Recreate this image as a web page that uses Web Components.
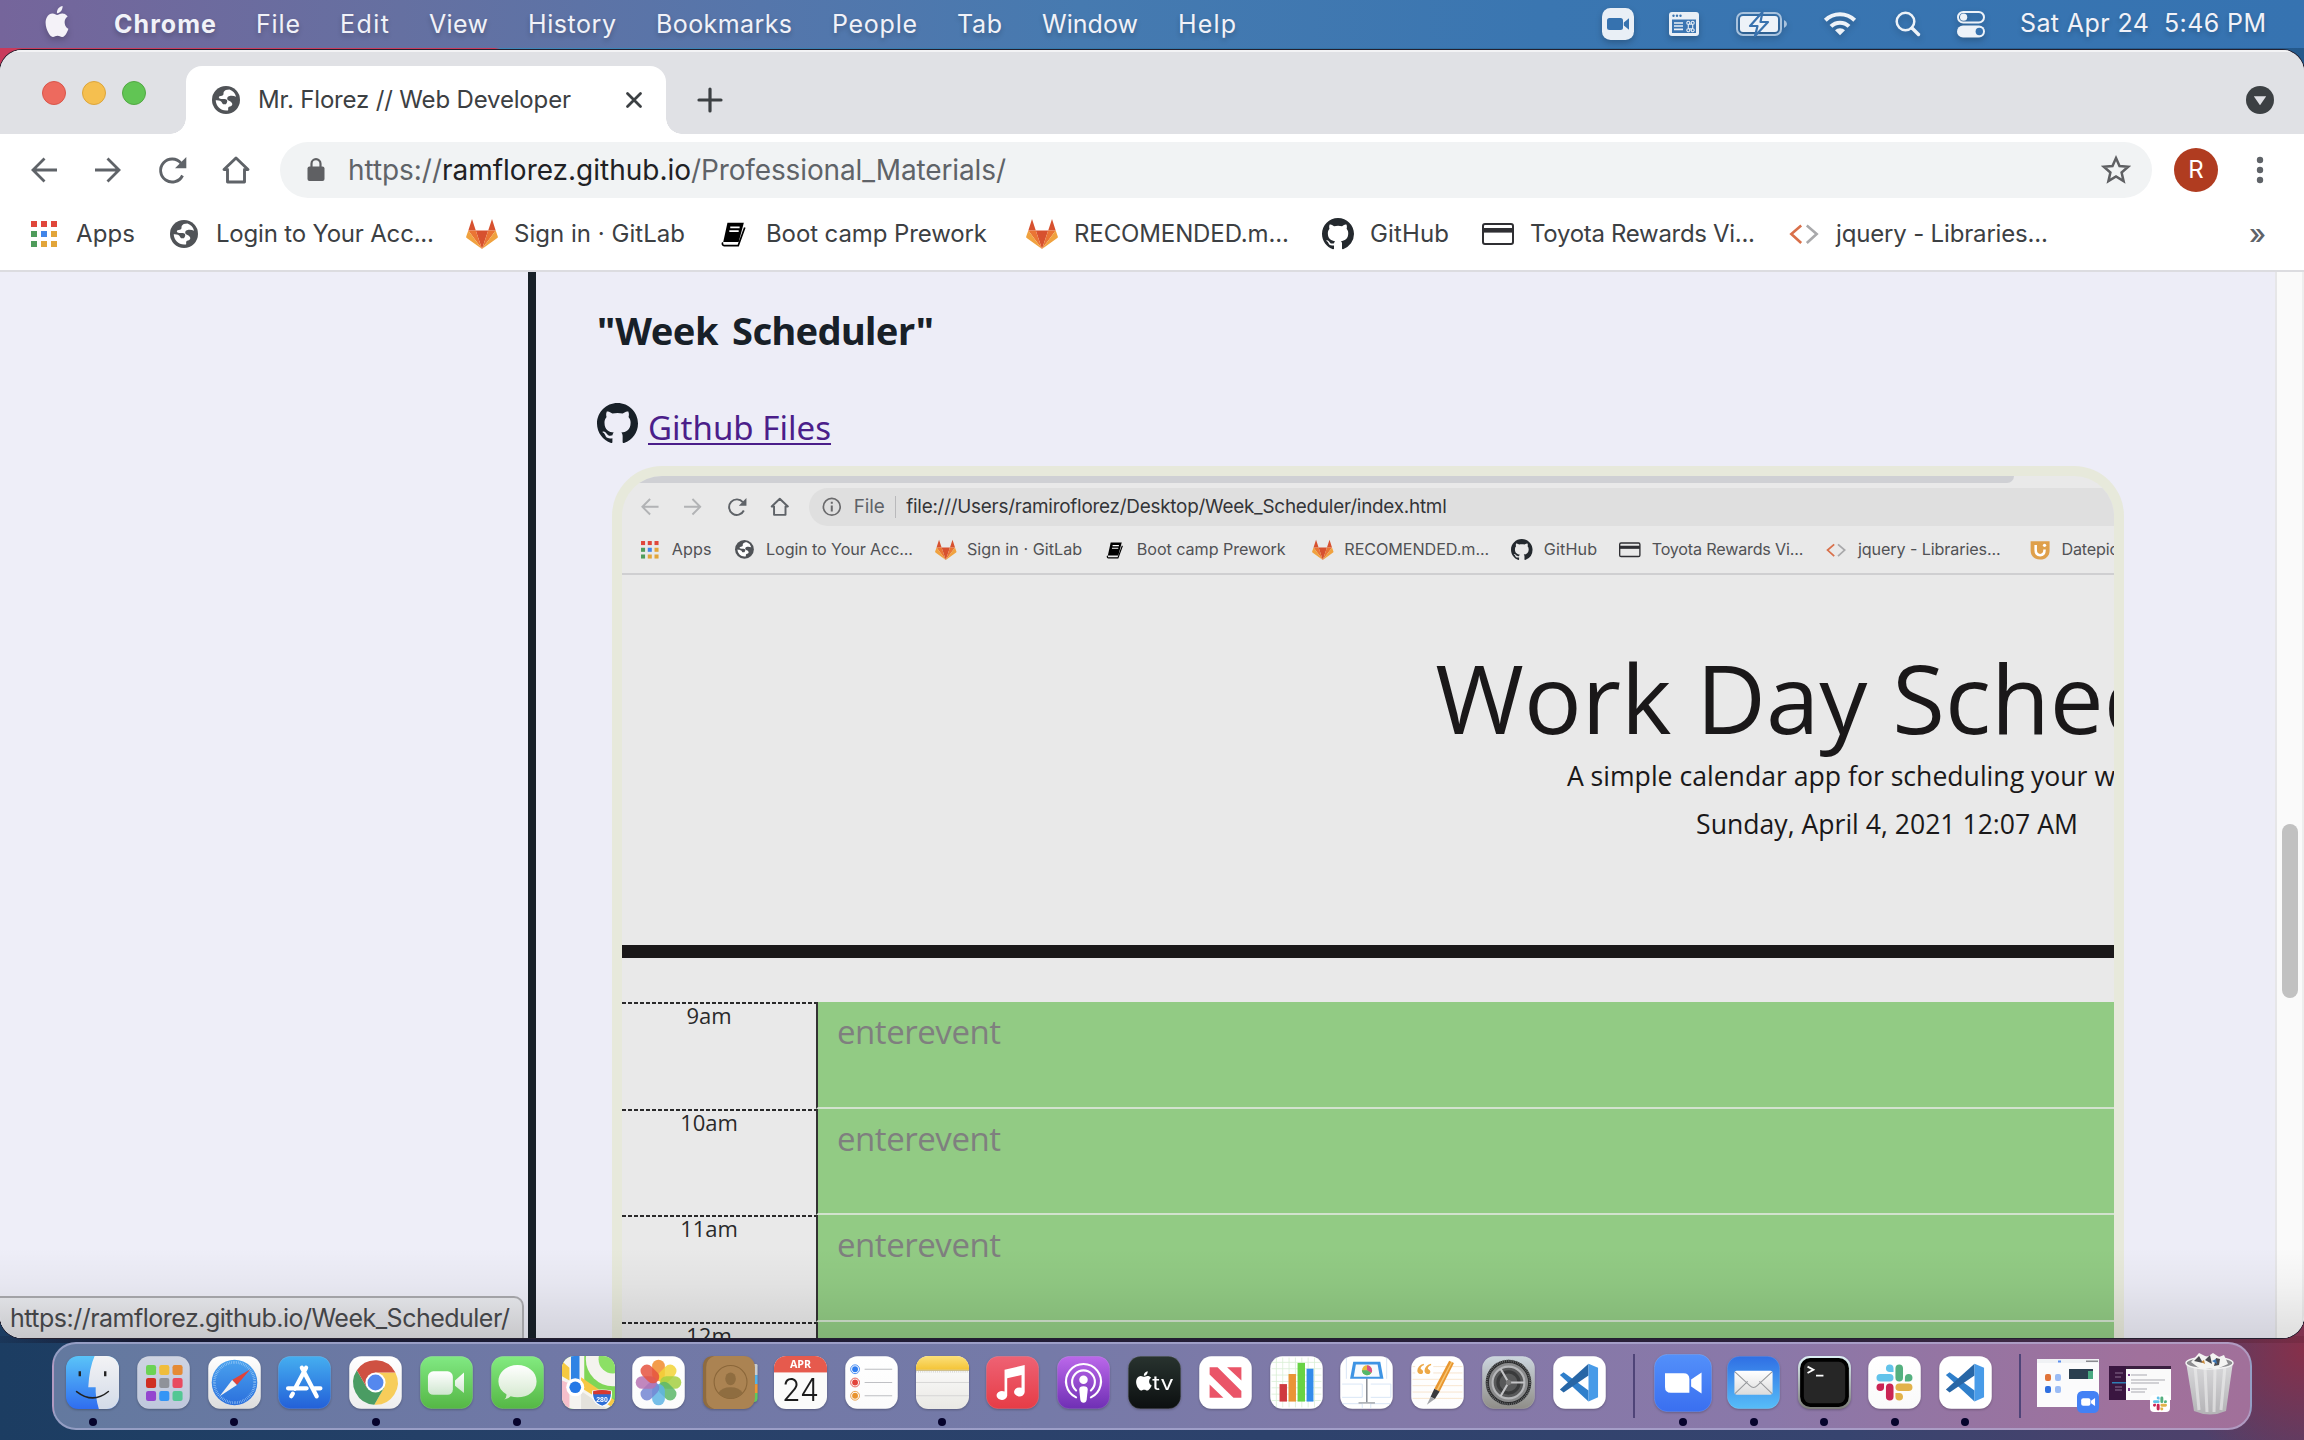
<!DOCTYPE html>
<html lang="en">
<head>
<meta charset="utf-8">
<title>Mr. Florez // Web Developer</title>
<style>
html,body{margin:0;padding:0;width:2304px;height:1440px;overflow:hidden;background:#1f3f66}
</style>
</head>
<body>
<mac-desktop></mac-desktop>
<script>
function define(name, render, after) {
  customElements.define(name, class extends HTMLElement {
    connectedCallback() {
      if (this.shadowRoot) return;
      this.attachShadow({ mode: 'open' }).innerHTML = render(this);
      if (after) after(this);
    }
  });
}

/* Icon registry: [viewBox, markup] */
const cat = 'M8 0C3.58 0 0 3.58 0 8c0 3.54 2.29 6.53 5.47 7.59.4.07.55-.17.55-.38 0-.19-.01-.82-.01-1.49-2.01.37-2.53-.49-2.69-.94-.09-.23-.48-.94-.82-1.13-.28-.15-.68-.52-.01-.53.63-.01 1.08.58 1.23.82.72 1.21 1.87.87 2.33.66.07-.52.28-.87.51-1.07-1.78-.2-3.64-.89-3.64-3.95 0-.87.31-1.59.82-2.15-.08-.2-.36-1.02.08-2.12 0 0 .67-.21 2.2.82.64-.18 1.32-.27 2-.27s1.36.09 2 .27c1.53-1.04 2.2-.82 2.2-.82.44 1.1.16 1.92.08 2.12.51.56.82 1.27.82 2.15 0 3.07-1.87 3.75-3.65 3.95.29.25.54.73.54 1.48 0 1.07-.01 1.93-.01 2.2 0 .21.15.46.55.38A8.01 8.01 0 0016 8c0-4.42-3.58-8-8-8z';
const apple = 'M12.152 6.896c-.948 0-2.415-1.078-3.96-1.04-2.04.027-3.91 1.183-4.961 3.014-2.117 3.675-.546 9.103 1.519 12.09 1.013 1.454 2.208 3.09 3.792 3.039 1.52-.065 2.09-.987 3.935-.987 1.831 0 2.35.987 3.96.948 1.637-.026 2.676-1.48 3.676-2.948 1.156-1.688 1.636-3.325 1.662-3.415-.039-.013-3.182-1.221-3.22-4.857-.026-3.04 2.48-4.494 2.597-4.559-1.429-2.09-3.623-2.324-4.39-2.376-2-.156-3.675 1.09-4.61 1.09zM15.53 3.83c.843-1.012 1.4-2.427 1.245-3.83-1.207.052-2.662.805-3.532 1.818-.78.896-1.454 2.338-1.273 3.714 1.338.104 2.715-.688 3.559-1.701';
const grad = (id, a, b) => `<linearGradient id="${id}" x1="0" y1="0" x2="0" y2="1"><stop offset="0" stop-color="${a}"/><stop offset="1" stop-color="${b}"/></linearGradient>`;
const tile = (a, b) => `${grad('bg', a, b)}<rect x=".5" y=".5" width="99" height="99" rx="23" fill="url(#bg)" stroke="#fff" stroke-opacity=".25"/>`;
const clip = '<clipPath id="c"><rect width="100" height="100" rx="23"/></clipPath>';
const slackPart = 'M5.042 15.165a2.528 2.528 0 0 1-2.52 2.523A2.528 2.528 0 0 1 0 15.165a2.527 2.527 0 0 1 2.522-2.52h2.52v2.52zM6.313 15.165a2.527 2.527 0 0 1 2.521-2.52 2.527 2.527 0 0 1 2.521 2.52v6.313A2.528 2.528 0 0 1 8.834 24a2.528 2.528 0 0 1-2.521-2.522v-6.313z';
const slackMark = ['#ca2554', '#62c3ea', '#54b07f', '#e2b24a'].map((f, i) => `<path d="${slackPart}" fill="${f}" transform="rotate(${i * 90} 12 12)"/>`).join('');
const ticks = (cx, cy, r, n, col, dash) => `<circle cx="${cx}" cy="${cy}" r="${r}" fill="none" stroke="${col}" stroke-width="5" stroke-dasharray="${dash}"/>`;
const vscode = `${tile('#fff', '#fff')}<path d="M13 36l7-5.500L67 65v21z" fill="#2f7fcb"/><path d="M67 14.500V37L20 69l-7-6z" fill="#2766a6"/><path d="M67 14.500L85 22v56L67 86z" fill="#489be8"/>`;

const ICONS = {
  apple: ['0 0 24 24', `<path d="${apple}" fill="#f4f2f8"/>`],
  octocat: ['0 0 16 16', `<path d="${cat}" fill="currentColor"/>`],
  globe: ['0 0 28 28', '<circle cx="14" cy="14" r="14" fill="#505357"/><path d="M17.500 3.500c-3 0-5 .8-5.800 2.600-.5 1.300.3 2.300-.8 3.200-1 .9-3.400.4-3.900 1.500-.6 1.500.4 2.100 2.600 2.100 3 0 5.200-.2 5.600 1.800.3 1.500-.8 2.300-1.200 3.600h-2.300c-1 0-1.200-.9-1.800-1.900-.8-1.400-2.600-2-5.200-2.100-.6 0-1-.1-1-.1.200 5.600 4.600 10.300 10.400 10.300 1 0 1.800-.1 2-.3.400-.7-.2-1.700.2-2.700.6-1.300 2.900-.8 3.700-2.300.6-1.200.1-2.200-.7-3-.9-1-2.700-1.200-3.600-2.200-1-1.200-.4-3.200 1.200-3.700 2.600-.8 4.800-.4 7.200.4A10.500 10.500 0 0 0 17.500 3.500z" fill="#fff"/>'],
  close: ['0 0 18 18', '<path d="M2.500 2.500l13 13M15.500 2.500l-13 13" stroke="#3c4043" stroke-width="2.800" stroke-linecap="round"/>'],
  plus: ['0 0 24 24', '<path d="M12 1v22M1 12h22" stroke="#3c4043" stroke-width="3.200" stroke-linecap="round"/>'],
  drop: ['0 0 28 28', '<circle cx="14" cy="14" r="14" fill="#3c4043"/><path d="M7.800 10.300h12.400L14 19.200z" fill="#e0e1e5"/>'],
  back: ['0 0 32 32', '<path d="M29 16H5M16.500 4.500L5 16l11.500 11.500" fill="none" stroke="currentColor" stroke-width="2.800"/>'],
  forward: ['0 0 32 32', '<path d="M3 16h24M15.500 4.500L27 16 15.500 27.500" fill="none" stroke="currentColor" stroke-width="2.800"/>'],
  reload: ['0 0 32 32', '<path d="M26.500 21.500A11.500 11.500 0 1 1 25 9.200" fill="none" stroke="currentColor" stroke-width="2.900"/><path d="M30.300 3v11.300H19z" fill="currentColor"/>'],
  home: ['0 0 32 32', '<path d="M7.500 28V15.500H4L16 4l12 11.500h-3.500V28z" fill="none" stroke="currentColor" stroke-width="2.900" stroke-linejoin="round"/>'],
  lock: ['0 0 32 32', '<rect x="7.500" y="12.500" width="17" height="14.500" rx="2" fill="#5f6063"/><path d="M11.500 13V9.700a4.500 4.500 0 0 1 9 0V13" fill="none" stroke="#5f6063" stroke-width="2.200"/>'],
  info: ['0 0 32 32', '<circle cx="16" cy="16" r="12.500" fill="none" stroke="#6a6a6c" stroke-width="2.500"/><path d="M16 14v9M16 8.500v3" stroke="#6a6a6c" stroke-width="3"/>'],
  star: ['0 0 32 32', '<path d="M16 4l3.500 8 8.700.8-6.600 5.700 2 8.600L16 22.500l-7.600 4.600 2-8.600-6.600-5.700 8.700-.8z" fill="none" stroke="#5f6063" stroke-width="2.500"/>'],
  dots: ['0 0 8 28', '<circle cx="4" cy="4" r="3.200" fill="#5f6368"/><circle cx="4" cy="14" r="3.200" fill="#5f6368"/><circle cx="4" cy="24" r="3.200" fill="#5f6368"/>'],
  apps: ['0 0 32 32', [[3, 3, '#e0473b'], [13, 3, '#e0473b'], [23, 3, '#e0473b'], [3, 13, '#4f9c5b'], [13, 13, '#4285e8'], [23, 13, '#e2a53a'], [3, 23, '#4f9c5b'], [13, 23, '#e2a53a'], [23, 23, '#e2a53a']].map(([x, y, f]) => `<rect x="${x}" y="${y}" width="6" height="6" fill="${f}"/>`).join('')],
  gitlab: ['0 0 32 32', '<path d="M6 1L2.300 12.500h7.500zM26 1l3.700 11.500h-7.500zM9.800 12.500h12.400L16 31z" fill="#d7512f"/><path d="M2.300 12.500h7.500L16 31zM29.700 12.500h-7.500L16 31z" fill="#ea7434"/><path d="M2.300 12.500L.2 18.500c-.2.700 0 1.200.5 1.600L16 31zM29.700 12.500l2.100 6c.2.700 0 1.200-.5 1.600L16 31z" fill="#f0a23f"/>'],
  book: ['0 0 32 32', '<path d="M9 4h17.500L21 24.500H4.500z" fill="#000"/><path d="M12 9h10M11 13h10" stroke="#fff" stroke-width="1.800"/><path d="M4 25c-1 2 0 3.300 1.500 3.300h15L27.500 9" fill="none" stroke="#000" stroke-width="1.800"/>'],
  card: ['0 0 32 32', '<rect x="1" y="6" width="30" height="20" rx="2" fill="none" stroke="#2f2f33" stroke-width="2"/><rect x="1" y="10" width="30" height="4.600" fill="#2f2f33"/>'],
  code: ['0 0 32 32', '<path d="M13 7L2.500 16 13 25.500" fill="none" stroke="#d9704a" stroke-width="2.800"/><path d="M19 7l10.500 9L19 25.500" fill="none" stroke="#a9a9ab" stroke-width="2.800"/>'],
  picker: ['0 0 32 32', '<path d="M1 2h30v15c0 8-6 14-15 14S1 25 1 17z" fill="#dfa04b"/><path d="M9 8v8c0 5 3 8 7 8s7-3 7-8v-1" fill="none" stroke="#fff" stroke-width="4"/><circle cx="23" cy="8.500" r="2.600" fill="#fff"/>'],
  /* menu bar status */
  zoomStatus: ['0 0 32 32', '<rect width="32" height="32" rx="8.500" fill="#e9eff6"/><rect x="5" y="10" width="16" height="12" rx="2.500" fill="#3672af"/><path d="M21.800 14.500L27 10.200v11.600l-5.200-4.300z" fill="#3672af"/>'],
  keys: ['0 0 30 24', '<rect x=".0" y="0" width="30" height="24" rx="3" fill="#e9eff6"/><path d="M3 7.500h24v13.500H3z" fill="#3b75b2"/><g fill="#3b75b2"><circle cx="4.500" cy="3.700" r="1.200"/><circle cx="8" cy="3.700" r="1.200"/><circle cx="11.500" cy="3.700" r="1.200"/></g><path d="M5 11h9M5 14h9M5 17.300h9" stroke="#e9eff6" stroke-width="1.700"/><path d="M19.300 12.300h4.400v4.400h-4.400zM19.300 12.300a1.500 1.500 0 1 0-1.500-1.400q0 1.400 1.500 1.400zM23.700 12.300a1.500 1.500 0 1 1 1.500-1.400q0 1.400-1.500 1.400zM19.300 16.700a1.500 1.500 0 1 1-1.500 1.400q0-1.400 1.500-1.400zM23.700 16.700a1.500 1.500 0 1 0 1.500 1.400q0-1.400-1.500-1.400z" fill="none" stroke="#e9eff6" stroke-width="1.100"/>'],
  battery: ['0 0 52 26', '<rect x="1" y="2" width="44" height="22" rx="6" fill="none" stroke="#a9c3de" stroke-width="2"/><path d="M48 9q3 1.500 3 4t-3 4z" fill="#a9c3de"/><rect x="4" y="5" width="38" height="16" rx="3" fill="#edf2f8"/><path d="M26.500 1L14 15h7.500L19 25 32 11h-7.500z" fill="#edf2f8" stroke="#3972ae" stroke-width="2.200" stroke-linejoin="round"/>'],
  wifi: ['0 0 34 26', '<g fill="none" stroke="#edf2f8" stroke-width="4"><path d="M2.300 10.200a21 21 0 0 1 29.400 0"/><path d="M8 16.400a12.700 12.700 0 0 1 18 0"/></g><path d="M17 25.300l-5-5a7 7 0 0 1 10 0z" fill="#edf2f8"/>'],
  search: ['0 0 26 26', '<circle cx="10.500" cy="10.500" r="8.800" fill="none" stroke="#edf2f8" stroke-width="2.500"/><path d="M17 17l6.500 6.500" stroke="#edf2f8" stroke-width="3.400" stroke-linecap="round"/>'],
  control: ['0 0 28 28', '<rect x="1" y="2" width="26" height="10.500" rx="5.250" fill="none" stroke="#edf2f8" stroke-width="2"/><circle cx="6.600" cy="7.200" r="3.600" fill="#edf2f8"/><rect x="0" y="15.500" width="28" height="12" rx="6" fill="#edf2f8"/><circle cx="22.300" cy="21.500" r="3.700" fill="#3672af"/>'],
  /* dock */
  finder: ['0 0 100 100', `${clip}${grad('a', '#5ac4f8', '#2f6df0')}${grad('b', '#f3f3f5', '#d3dbe8')}<g clip-path="url(#c)"><rect width="100" height="100" fill="url(#a)"/><path d="M54 0Q44 22 42 59h14q-1 18 6 41h38V0z" fill="url(#b)"/></g><path d="M26 29v9M74 29v9" stroke="#222" stroke-width="4.500"/><path d="M20 67q31 24 60 0" fill="none" stroke="#222" stroke-width="3" stroke-linecap="round"/>`],
  launchpad: ['0 0 100 100', tile('#cfd4e2', '#bfc8dc') + ['#6bd355', '#f0bd3c', '#e58a35', '#cf2f23', '#8f9299', '#e84a5f', '#9446cf', '#3495f5', '#54c794'].map((f, i) => `<rect x="${17 + (i % 3) * 25}" y="${17 + Math.floor(i / 3) * 24.500}" width="19" height="19" rx="4" fill="${f}"/>`).join('')],
  safari: ['0 0 100 100', `${tile('#fff', '#dcdcdc')}${grad('s', '#4aa2ee', '#2b6fdc')}<circle cx="50" cy="50" r="43" fill="url(#s)"/>${ticks(50, 50, 38, 60, '#a9d2f7', '1 2.300')}<path d="M80 25L45.500 45.500l9 9z" fill="#e0433a"/><path d="M22 76l32.500-21.500-9-9z" fill="#f1f1f1"/>`],
  appstore: ['0 0 100 100', `${tile('#45aef0', '#2360d8')}<g stroke="#fff" stroke-width="8" stroke-linecap="round"><path d="M53 22L32 62M45 22l28 54M19 61h35M69 61h11M28 71l-3 5"/></g>`],
  chrome: ['0 0 100 100', `${tile('#fff', '#eee')}<path d="M50 31H87.500A42 42 0 0 1 47.700 92L66.450 59.500z" fill="#f7cd5a"/><path d="M66.450 59.500L47.700 92A42 42 0 0 1 14.800 27L33.550 59.500z" fill="#4a9c63"/><path d="M33.550 59.500L14.800 27A42 42 0 0 1 87.500 31H50z" fill="#cf5142"/><circle cx="50" cy="50" r="19" fill="#fff"/><circle cx="50" cy="50" r="15" fill="#5588ee"/>`],
  facetime: ['0 0 100 100', `${tile('#81e983', '#55b745')}${grad('w', '#fff', '#cfe6cf')}<rect x="15" y="29" width="47" height="44" rx="10" fill="url(#w)"/><path d="M66 46l17-15v39L66 56z" fill="url(#w)"/>`],
  messages: ['0 0 100 100', `${tile('#83eb80', '#55b745')}${grad('w', '#fff', '#d3e8cd')}<path d="M50 17c20 0 36 13 36 31S70 78 50 78q-7 0-13-2-4 5-12 6 5-4 4-10Q14 63 14 48c0-18 16-31 36-31z" fill="url(#w)"/>`],
  maps: ['0 0 100 100', `${clip}<g clip-path="url(#c)"><rect width="100" height="100" fill="#7fd657"/><circle cx="96" cy="6" r="51" fill="#f4f3ee"/><circle cx="96" cy="6" r="27" fill="#8ce065"/><path d="M0 0h42v60L100 88v12H0z" fill="#f5f4f0"/><path d="M42 0v46L80 76 42 58z" fill="#7fd657"/><path d="M0 10l14 12v24L0 38z" fill="#f6c93f"/><path d="M0 46l14 6v48H0z" fill="#f6bfcb"/><path d="M36 40l64 44v16L36 60z" fill="#f7c744"/><path d="M36 66l50 34H36z" fill="#e4e2dc"/><path d="M25 0v60" stroke="#2f83e4" stroke-width="16"/></g><circle cx="25" cy="59" r="17" fill="#fff"/><circle cx="25" cy="59" r="11" fill="#2478e6"/><path d="M58 66q17-4 35 0 3 22-17 29-21-7-18-29z" fill="#2f6fd6" stroke="#fff" stroke-width="2"/><path d="M59 66q16-4 33 0v6H59z" fill="#d8392f"/><text x="75.500" y="86" font-family="Liberation Sans" font-weight="700" font-size="13" fill="#fff" text-anchor="middle">280</text>`],
  photos: ['0 0 100 100', tile('#fff', '#fbfbfb') + ['#f18b2c', '#f2d437', '#a5cf42', '#5cb768', '#5fb4e4', '#7386d2', '#b672b3', '#e5533f'].map((f, i) => `<rect x="38" y="7" width="24" height="40" rx="12" fill="${f}" fill-opacity=".85" transform="rotate(${i * 45} 50 50)"/>`).join('')],
  contacts: ['0 0 100 100', '<path d="M88 15h13q2 0 2 3v18H90z" fill="#c9cdd0"/><path d="M90 36h13v17H90z" fill="#55b3e8"/><path d="M90 53h13v17H90z" fill="#ee9632"/><path d="M90 70h13v10q0 5-5 7h-8z" fill="#60c85c"/><rect x="0" y="0" width="98" height="100" rx="21" fill="#ab8352"/><path d="M21 0Q0 0 0 21v58q0 21 21 21-15-5-15-21V21Q6 5 21 0z" fill="#8e6b40"/><g fill="none" stroke="#8a6639" stroke-width="2"><circle cx="52" cy="49" r="31"/></g><ellipse cx="52" cy="43" rx="10" ry="12" fill="#8f6d40"/><path d="M29 70q6-11 23-11t23 11q-9 10-23 10T29 70z" fill="#8f6d40"/>'],
  calendar: ['0 0 100 100', `${clip}<g clip-path="url(#c)"><rect width="100" height="100" fill="#fbfbfa"/><rect width="100" height="31" fill="#e65a4d"/></g><text x="50" y="23" font-family="Open Sans" font-weight="700" font-size="20" fill="#fff" text-anchor="middle" textLength="40" lengthAdjust="spacingAndGlyphs">APR</text><text x="50" y="84" font-family="Inter" font-weight="300" font-size="60" fill="#1c1c1c" text-anchor="middle" textLength="70" lengthAdjust="spacingAndGlyphs">24</text>`],
  reminders: ['0 0 100 100', tile('#fff', '#fbfbfb') + [['#2f7df0', 25], ['#e2433a', 50], ['#e8932e', 75]].map(([f, y]) => `<circle cx="19" cy="${y}" r="8.300" fill="none" stroke="${f}" stroke-width="1.600"/><circle cx="19" cy="${y}" r="5.500" fill="${f}"/><path d="M37 ${y}h52" stroke="#bfc0c4" stroke-width="2"/>`).join('')],
  notes: ['0 0 100 100', `${clip}${grad('y', '#fbe07a', '#f4c436')}${grad('p', '#fff', '#e9e8e4')}<g clip-path="url(#c)"><rect width="100" height="100" fill="url(#p)"/><rect width="100" height="26" fill="url(#y)"/><path d="M0 27h100" stroke="#b99f4a" stroke-width="1.500"/><path d="M0 30h100" stroke="#aaa" stroke-width="1.500" stroke-dasharray="1.500 2.500"/><path d="M0 50h100M0 75h100" stroke="#cfcfcf" stroke-width="1.500"/></g>`],
  music: ['0 0 100 100', `${tile('#ee6274', '#e63c46')}<path d="M35 26l38-9v51a10 8.500 0 1 1-6-8V36l-27 6v33a10 8.500 0 1 1-5-8z" fill="#fff"/>`],
  podcasts: ['0 0 100 100', `${tile('#bb68ea', '#6f2fb4')}<g fill="none" stroke="#fff" stroke-width="4" stroke-linecap="round"><path d="M36 78a33 33 0 1 1 28 0"/><path d="M36 65a21.500 21.500 0 1 1 28 0"/></g><circle cx="50" cy="45" r="8" fill="#fff"/><path d="M42 63q0-6 8-6t8 6l-2 19q-1 6-6 6t-6-6z" fill="#fff"/>`],
  tv: ['0 0 100 100', `${tile('#28332f', '#0c0f10')}<g transform="translate(12 29) scale(1.500)"><path d="${apple}" fill="#fff"/></g><text x="46" y="65" font-family="Inter" font-weight="400" font-size="37" fill="#fff" textLength="40" lengthAdjust="spacingAndGlyphs">tv</text>`],
  news: ['0 0 100 100', `${tile('#fff', '#fff')}<path d="M20 21h15l45 45v13H65L20 35z" fill="#ea5568"/><path d="M53 21h27v25zM20 54v25h26z" fill="#ea5568"/>`],
  numbers: ['0 0 100 100', `${tile('#fff', '#fff')}<path d="M12 3v94M24 3v94M36 3v94M48 3v94M60 3v94M72 3v94M84 3v94M3 12h94M3 24h94M3 36h94M3 48h94M3 60h94M3 72h94M3 84h94" stroke="#d9efd5" stroke-width="1.500"/><path d="M18 53h14v33H18z" fill="#cf3a3f"/><path d="M35 34h14v52H35z" fill="#ea9437"/><path d="M52 13h14v73H52z" fill="#68d345"/><path d="M69 24h13v62H69z" fill="#338ceb"/>`],
  keynote: ['0 0 100 100', `${tile('#fff', '#fff')}<g fill="none" stroke="#cfe0f4" stroke-width="1.500"><path d="M4 53h38v25H4M58 53h38v25H58M4 90h38v8M58 98v-8h38M12 3v40M88 3v40"/></g><path d="M49 42h3v46h-3z" fill="#8c9097"/><path d="M35 87h31v3H35z" fill="#a9adb2"/><path d="M25 11h51l6 32H19z" fill="#3e94e4"/><path d="M30 16h41l4 23H26z" fill="#f7fafd"/><circle cx="51" cy="27" r="9.500" fill="#e9ba3c"/><path d="M51 27V17.500a9.500 9.500 0 0 1 8 14.500z" fill="#da4f87"/><path d="M51 27l8 5a9.500 9.500 0 0 1-17.500-5z" fill="#52b86c"/>`],
  pages: ['0 0 100 100', `${tile('#fff', '#fdfdfd')}<path d="M3 20h94M3 32h94M3 44h94M3 56h94M3 68h94M3 80h94" stroke="#f6dfc4" stroke-width="1.500"/><path d="M8 10h34v28H8z" fill="#fff"/><text x="9" y="56" font-family="Liberation Serif" font-weight="700" font-size="62" fill="#eda846">“</text><path d="M72 9l9 4-27 54-10-5z" fill="#e8962f"/><path d="M76 11l2 1-27 53-3-1z" fill="#f7c774"/><path d="M44 62l10 5-9 14-8-4z" fill="#3b3b3d"/><path d="M37 77l8 4-15 11z" fill="#a3a5a8"/>`],
  prefs: ['0 0 100 100', `${tile('#ccd6de', '#8f8d88')}<circle cx="50" cy="50" r="40" fill="#8a8b8c" stroke="#2c2d2e" stroke-width="6"/>${ticks(50, 50, 41, 60, '#77797b', '1.200 2.400')}<circle cx="50" cy="50" r="30" fill="#58595a" stroke="#b5b6b8" stroke-width="4"/><circle cx="50" cy="50" r="20" fill="none" stroke="#3a3b3c" stroke-width="6"/><g stroke="#c3c4c6" stroke-width="4"><path d="M50 50h30M50 50L35 24M50 50L35 76"/></g><circle cx="50" cy="50" r="5" fill="#777"/>`],
  vscode: ['0 0 100 100', vscode],
  zoom: ['0 0 100 100', `${tile('#5390fa', '#3a6ff0')}<path d="M19 33h32q10 0 10 10v24H29q-10 0-10-10z" fill="#fff"/><path d="M64 44l18-12v36L64 56z" fill="#fff"/>`],
  mail: ['0 0 100 100', `${tile('#2f6fe4', '#57bdf8')}${grad('w', '#fff', '#dcdcdc')}<rect x="14" y="28" width="72" height="45" rx="4" fill="url(#w)"/><path d="M15 71l24-23M85 71L61 48M15 30l28 26q7 7 14 0l28-26" fill="none" stroke="#97999c" stroke-width="2"/>`],
  terminal: ['0 0 100 100', `${grad('t', '#dff1f6', '#7b7b78')}<rect width="100" height="100" rx="22" fill="url(#t)"/><rect x="4" y="4" width="92" height="92" rx="19" fill="#000"/><rect x="11" y="11" width="78" height="78" rx="12" fill="#262626"/><path d="M18 20l11 6-11 6M34 37h14" fill="none" stroke="#fff" stroke-width="3.500"/>`],
  slack: ['0 0 100 100', `${tile('#fff', '#fafafa')}<g transform="translate(16 16) scale(2.830)">${slackMark}</g>`],
  winZoom: ['0 0 62 54', '<path d="M0 0h62v48H0z" fill="#fbfbfc"/><path d="M0 0h62v4H0z" fill="#f0f2f5"/><rect x="21" y="1.500" width="3" height="2" fill="#5b8ff0"/><rect x="49" y="1.500" width="12" height="1.500" fill="#8a8a90"/><rect x="8" y="15" width="6" height="7" rx="2" fill="#e0743a"/><rect x="18" y="15" width="6" height="7" rx="2" fill="#9bbcf5"/><rect x="8" y="27" width="6" height="7" rx="2" fill="#2f6fe0"/><rect x="18" y="27" width="6" height="7" rx="2" fill="#9bbcf5"/><rect x="32" y="10" width="24" height="10" fill="#2b3f50"/><rect x="51" y="12" width="5" height="8" fill="#49a881"/><g transform="translate(40 32) scale(.220)"><rect width="100" height="100" rx="24" fill="#4381f5"/><rect x="19" y="33" width="42" height="34" rx="9" fill="#fff"/><path d="M64 44l18-12v36L64 56z" fill="#fff"/></g>'],
  winSlack: ['0 0 62 46', `<path d="M0 0h62v34H0z" fill="#fafafa"/><path d="M0 0h62v3H0z" fill="#3b1f40"/><path d="M0 0h17v34H0z" fill="#3a1640"/><path d="M3 16h14v1.500H3z" fill="#2f7fb4"/><path d="M6 7h8M6 11h6M6 21h7M6 24h7" stroke="#8a6f90" stroke-width="1"/><path d="M22 9h16M22 14h34M22 17h28M22 23h16M22 26h14" stroke="#a9a9b0" stroke-width="1"/><path d="M19 8h2v2h-2zM19 22h2v3h-2z" fill="#7c3f8f"/><rect x="41" y="29" width="20" height="17" rx="4" fill="#fff"/><g transform="translate(44 30.500) scale(.583)">${slackMark}</g>`],
  trash: ['0 0 50 64', `${grad('t', '#dcdcde', '#b4b3b6')}<path d="M1 10q24-7 47 0l-7 49q-16 7-32 0z" fill="url(#t)"/><path d="M10 14l4 44M20 16l2 44M30 16l-1 44M40 14l-4 44" stroke="#efefef" stroke-width="3" opacity=".6"/><ellipse cx="24.500" cy="11" rx="23.500" ry="6" fill="#8d8d90" stroke="#f2f2f2" stroke-width="1.500"/><path d="M6 10L14 1l8 4 6-4 6 4 5-2 4 9-9 4H14z" fill="#f4f4f2"/><path d="M9 9l5-5 4 7zM20 8l5-5 2 9zM31 6l4 1-1 6-5 1z" fill="#4b4c50"/><path d="M27 9l4-2 1 5z" fill="#3c78b8"/><path d="M16 10l3-2 1 4z" fill="#c98a3c"/>`]
};

define('ui-icon', el => {
  const [vb, body] = ICONS[el.getAttribute('name')];
  const w = el.getAttribute('w') || 32, h = el.getAttribute('h') || w;
  return `<style>:host{display:block;flex:none;width:calc(var(--u,1px)*${w});height:calc(var(--u,1px)*${h})}svg{display:block;width:100%;height:100%;overflow:visible}</style><svg viewBox="${vb}" preserveAspectRatio="none">${body}</svg>`;
});

/* Text that spreads its letter-spacing to fill the width given in "w". */
define('fit-text', el => `<style>:host{display:block;flex:none;white-space:pre;width:calc(var(--u,1px)*${el.getAttribute('w')})}span{display:inline-block}</style><span><slot></slot></span>`, el => {
  const span = el.shadowRoot.querySelector('span');
  const n = el.textContent.length - 1;
  const gap = el.getBoundingClientRect().width - span.getBoundingClientRect().width;
  if (n > 0) span.style.letterSpacing = gap / n + 'px';
});

define('menu-bar', () => `<style>
:host{display:flex;align-items:center;height:48px;box-sizing:border-box;padding:0 38px 0 43px;background:linear-gradient(90deg,#75659b 0,#6570a1 400px,#5576ab 760px,#467ab0 1080px,#3a76b1 1540px,#3673b1 100%);color:#f1f2f8;font:400 25px/46px Inter,sans-serif}
nav,aside{display:flex;align-items:center}
nav{gap:40px;text-shadow:0 3px 5px rgba(0,0,0,.22)}
aside{margin-left:auto}
ui-icon{filter:drop-shadow(0 3px 3px rgba(0,0,0,.22))}
b{font-weight:700}
nav ui-icon{margin:-6px 3px 0 0}
</style><nav><ui-icon name="apple" w="28" h="31"></ui-icon><fit-text w="102"><b>Chrome</b></fit-text>${[['File', 44], ['Edit', 49], ['View', 59], ['History', 88], ['Bookmarks', 136], ['People', 85], ['Tab', 45], ['Window', 96], ['Help', 58]].map(([t, w]) => `<fit-text w="${w}">${t}</fit-text>`).join('')}</nav>
<aside><ui-icon name="zoomStatus" w="32"></ui-icon><ui-icon name="keys" w="30" h="24" style="margin-left:35px"></ui-icon><ui-icon name="battery" w="52" h="26" style="margin-left:37px"></ui-icon><ui-icon name="wifi" w="34" h="26" style="margin-left:35px;margin-top:-2px"></ui-icon><ui-icon name="search" w="26" style="margin-left:38px"></ui-icon><ui-icon name="control" w="28" style="margin-left:36px"></ui-icon><fit-text w="246" style="margin-left:35px;margin-top:-2px;text-shadow:0 3px 5px rgba(0,0,0,.22)">Sat Apr 24  5:46 PM</fit-text></aside>`);

define('tab-strip', () => `<style>
:host{display:flex;height:84px;background:#e0e1e5;box-shadow:inset 0 2px #f3f3f5}
.lights{display:flex;gap:16px;padding:31px 40px 0 42px}
.lights i{width:22px;height:22px;border-radius:50%;border:1px solid}
.tab{position:relative;box-sizing:border-box;width:480px;height:68px;margin-top:16px;border-radius:16px 16px 0 0;background:#fff;display:flex;align-items:center;padding-left:26px}
.tab:before,.tab:after{content:"";position:absolute;bottom:0;width:16px;height:16px}
.tab:before{left:-16px;background:radial-gradient(circle at 0 0,transparent 15.500px,#fff 16px)}
.tab:after{right:-16px;background:radial-gradient(circle at 100% 0,transparent 15.500px,#fff 16px)}
fit-text{font:400 24px/40px Inter,sans-serif;color:#3c4043;margin-left:18px}
</style><div class="lights"><i style="background:#ed6a5e;border-color:#d95549"></i><i style="background:#f5bf4f;border-color:#dca53b"></i><i style="background:#61c554;border-color:#52a843"></i></div>
<div class="tab"><ui-icon name="globe" w="28"></ui-icon><fit-text w="313">Mr. Florez // Web Developer</fit-text><ui-icon name="close" w="18" style="margin-left:54px"></ui-icon></div>
<ui-icon name="plus" w="24" style="margin:38px 0 0 32px"></ui-icon><ui-icon name="drop" w="28" style="margin:36px 30px 0 auto"></ui-icon>`);

define('tool-bar', el => {
  const file = el.hasAttribute('file');
  return `<style>
:host{display:flex;align-items:center;height:calc(var(--u)*72);width:calc(var(--u)*2304);color:#5f6368;font:400 calc(var(--u)*28)/calc(var(--u)*50) Inter,sans-serif}
.nav{display:flex;gap:calc(var(--u)*32);padding:0 calc(var(--u)*28)}
.dim{opacity:${file ? .4 : 1}}
.box{display:flex;align-items:center;box-sizing:border-box;flex:none;width:calc(var(--u)*${file ? 2100 : 1872});height:calc(var(--u)*56);border-radius:calc(var(--u)*28);background:${file ? '#dfdfdf' : '#f1f3f4'};padding:0 calc(var(--u)*20) 0 calc(var(--u)*${file ? 18 : 20})}
.mid{display:flex;padding-left:calc(var(--u)*16)}
.host{color:${file ? '#333437' : '#202124'}}
.sep{width:calc(var(--u)*2);height:calc(var(--u)*32);align-self:center;background:#b9b9bb;margin:0 calc(var(--u)*15)}
.who{width:44px;height:44px;border-radius:50%;background:#b03c20;color:#fff;margin-left:22px;display:flex;align-items:center;justify-content:center;font-size:24px}
</style><div class="nav"><ui-icon class="dim" name="back"></ui-icon><ui-icon class="dim" name="forward"></ui-icon><ui-icon name="reload"></ui-icon><ui-icon name="home"></ui-icon></div>
<div class="box">${file
    ? '<ui-icon name="info"></ui-icon><div class="mid"><fit-text w="46">File</fit-text><i class="sep"></i><fit-text class="host" w="802">file:///Users/ramiroflorez/Desktop/Week_Scheduler/index.html</fit-text></div>'
    : '<ui-icon name="lock"></ui-icon><div class="mid"><fit-text w="94">https://</fit-text><fit-text class="host" w="249">ramflorez.github.io</fit-text><fit-text w="315">/Professional_Materials/</fit-text></div><ui-icon name="star" style="margin-left:auto"></ui-icon>'}</div>
${file ? '' : '<div class="who">R</div><ui-icon name="dots" w="8" h="28" style="margin-left:38px"></ui-icon>'}`;
});

define('bookmark-bar', el => {
  const file = el.hasAttribute('file');
  const items = [['apps', 'Apps', 59, 140], ['globe', 'Login to Your Acc...', 218, 298], ['gitlab', 'Sign in · GitLab', 171, 252], ['book', 'Boot camp Prework', 221, 308], ['gitlab', 'RECOMENDED.m...', 215, 296], ['octocat', 'GitHub', 79, 160], ['card', 'Toyota Rewards Vi...', 225, 306], ['code', 'jquery - Libraries...', 212, 302]];
  if (file) items.push(['picker', 'Datepicker', 120, 200]);
  return `<style>
:host{display:flex;align-items:center;box-sizing:border-box;height:calc(var(--u)*66);width:calc(var(--u)*2304);padding:0 calc(var(--u)*38) calc(var(--u)*10) calc(var(--u)*28);font:400 calc(var(--u)*24)/calc(var(--u)*40) Inter,sans-serif;color:${file ? '#515255' : '#3c4043'}}
div{display:flex;align-items:center;flex:none}
.ic{width:calc(var(--u)*32);justify-content:center;margin-right:calc(var(--u)*16);color:#24292e}
.more{margin-left:auto;font-size:28px;color:#5f6368;font-weight:500}
</style>${items.map(([i, t, w, p]) => `<div style="width:calc(var(--u)*${p})"><div class="ic"><ui-icon name="${i}" w="${i === 'globe' ? 28 : i === 'octocat' || i === 'gitlab' || i === 'apps' || i === 'card' ? 32 : 30}"></ui-icon></div><fit-text w="${w}">${t}</fit-text></div>`).join('')}${file ? '' : '<span class="more">»</span>'}`;
});

define('hour-row', el => `<style>
:host{--u:1px;display:flex;height:106.400px;flex:none}
.t{box-sizing:border-box;width:194px;padding-right:20px;text-align:center;font:400 22px/26px "Open Sans",sans-serif;color:#2a2a2b;background:repeating-linear-gradient(90deg,#2a2a2b 0 4px,transparent 4px 6px) 0 0/100% 2px no-repeat}
.e{flex:1;border-left:2px solid #333;box-sizing:border-box;background:#92cb84;border-bottom:2px solid #d2e2ce;padding:9px 0 0 19px;font:400 33px/42px "Open Sans",sans-serif;color:#7f7f7f}
</style><div class="t">${el.getAttribute('hour')}</div><div class="e"><fit-text w="164">enterevent</fit-text></div>`);

define('scheduler-shot', () => `<style>
:host{display:block;box-sizing:border-box;width:1512px;height:1000px;border:10px solid #e7e9db;border-bottom:0;border-radius:50px 50px 0 0;overflow:hidden;background:#e9e9e9;flex:none}
.in{--u:.674px;display:flex;flex-direction:column;width:1492px;height:100%;overflow:hidden}
.strip{height:6.500px;width:1392px;background:#cfd0d4;border-radius:0 0 8px 0;flex:none}
.bars{margin-left:-1.500px;flex:none;width:1600px}
.line{height:2px;background:#cfcfd1;flex:none;margin-top:-2.500px}
.hero{width:2530px;height:370.500px;box-sizing:border-box;flex:none;display:flex;flex-direction:column;align-items:center;padding-top:55px;font-family:"Open Sans",sans-serif;color:#1a1819}
h1{margin:0;font-size:96px;line-height:134px;font-weight:400}
p{margin:0;font-size:26.600px;line-height:48px}
.bar{height:13px;background:#1a1819;flex:none;margin-bottom:44px}
</style><div class="in"><div class="strip"></div><div class="bars"><tool-bar file></tool-bar><bookmark-bar file></bookmark-bar></div><div class="line"></div>
<div class="hero"><h1>Work Day Scheduler</h1><p style="margin-top:-11.500px">A simple calendar app for scheduling your work day</p><p>Sunday, April 4, 2021 12:07 AM</p></div>
<div class="bar"></div>${['9am', '10am', '11am', '12m'].map(h => `<hour-row hour="${h}"></hour-row>`).join('')}</div>`);

define('page-view', () => `<style>
:host{display:flex;position:relative;height:1066px;overflow:hidden;background:#ededf7}
.side{width:528px;border-right:8px solid #182028;background:#eeeef8;flex:none}
main{flex:1;padding-left:61px;color:#182028;font-family:"Noto Sans",sans-serif;display:flex;flex-direction:column}
h3{margin:31px 0 0;font-size:38px;line-height:54px;font-weight:700;word-spacing:5px}
.row{display:flex;align-items:center;gap:10px;margin:43px 0 20px;height:46px}
a{color:#4b1e8a;font-size:33px;line-height:44px;display:block;margin-top:9px;text-decoration:none}
u{text-decoration-thickness:2px;text-underline-offset:3px}
scheduler-shot{margin-left:15px}
.scroll{flex:none;background:#fafafa;border-left:2px solid #e6e6e8;box-sizing:border-box;width:29px;border-right:2px solid #eee}
.thumb{width:16px;height:174px;border-radius:8px;background:#c1c1c1;margin:552px 0 0 5px}
.shade{position:absolute;left:0;right:0;bottom:0;height:90px;background:linear-gradient(rgba(0,0,0,0),rgba(0,0,0,.03) 40%,rgba(0,0,0,.11));pointer-events:none}
.status{position:absolute;left:0;bottom:0;width:524px;height:42px;box-sizing:border-box;border:2px solid #a2a2a6;border-width:2px 2px 0 0;border-radius:0 10px 0 0;background:linear-gradient(#dedfe3,#c8c8cb);font:400 25px/40px Inter,sans-serif;color:#434447;padding-left:10px}
</style><div class="side"></div><main><h3><fit-text w="337">"Week Scheduler"</fit-text></h3>
<div class="row"><ui-icon name="octocat" w="41"></ui-icon><a><fit-text w="183"><u>Github Files</u></fit-text></a></div><scheduler-shot></scheduler-shot></main>
<div class="scroll"><div class="thumb"></div></div><div class="shade"></div><div class="status"><fit-text w="500">https://ramflorez.github.io/Week_Scheduler/</fit-text></div>`);

define('browser-window', () => `<style>
:host{--u:1px;display:flex;flex-direction:column;height:1288px;margin-top:2px;border-radius:22px;overflow:hidden;background:#fff;box-shadow:0 0 0 1px #24202f}
.rule{height:2px;background:#dcdce0;margin-top:-2px;flex:none}
</style><tab-strip></tab-strip><tool-bar></tool-bar><bookmark-bar></bookmark-bar><div class="rule"></div><page-view></page-view>`);

define('dock-item', el => {
  const big = el.getAttribute('name') === 'zoom';
  return `<style>
:host{display:flex;flex-direction:column;align-items:center;width:53px;height:70px;padding-top:14px;flex:none}
ui-icon{margin:${big ? '-2px -3px -3px' : '0'};filter:drop-shadow(0 1px 1px rgba(0,0,0,.25))}
i{width:8px;height:8px;border-radius:50%;margin-top:9px;background:#06032c}
</style><ui-icon name="${el.getAttribute('name')}" w="${big ? 58 : 53}"></ui-icon>${el.hasAttribute('on') ? '<i></i>' : ''}`;
});

define('mac-dock', () => {
  const item = n => `<dock-item name="${n.replace('*', '')}"${n.includes('*') ? ' on' : ''}></dock-item>`;
  return `<style>
:host{display:flex;box-sizing:border-box;width:2200px;height:88px;margin:4px 0 0 52px;border:2px solid rgba(190,190,225,.55);border-radius:24px;background:linear-gradient(90deg,#63799f 0,#7078a6 22%,#757aa8 45%,#8379a8 62%,#8a78a9 78%,#a0719c 95%,#a1709a);padding-left:12px}
div{display:flex;gap:17.800px;margin-top:-2px}
i{width:2px;height:64px;margin-top:10px;background:#4f4478;flex:none}
</style><div>${['finder*', 'launchpad', 'safari*', 'appstore', 'chrome*', 'facetime', 'messages*', 'maps', 'photos', 'contacts', 'calendar', 'reminders', 'notes*', 'music', 'podcasts', 'tv', 'news', 'numbers', 'keynote', 'pages', 'prefs', 'vscode'].map(item).join('')}</div>
<i style="margin-left:27px"></i><div style="margin-left:22px;gap:17.500px">${['zoom*', 'mail*', 'terminal*', 'slack*', 'vscode*'].map(item).join('')}</div><i style="margin-left:27px"></i>
<ui-icon name="winZoom" w="62" h="54" style="margin:15px 0 0 16px"></ui-icon><ui-icon name="winSlack" w="62" h="46" style="margin:22px 0 0 10px"></ui-icon><ui-icon name="trash" w="50" h="64" style="margin:8px 0 0 14px"></ui-icon>`;
});

define('mac-desktop', () => `<style>
:host{display:flex;flex-direction:column;width:2304px;height:1440px;background:linear-gradient(90deg,#c93a5b 0 495px,#3b86b8 500px,#24598c 100%) 0 0/100% 80px no-repeat,linear-gradient(90deg,rgba(18,20,42,.15),rgba(20,18,40,.85) 6%,rgba(42,26,48,.85) 80%,rgba(110,40,62,.5)) 0 1336px/100% 7px no-repeat,radial-gradient(circle at 2304px 1350px,#86304a 0,#86304a00 130px),linear-gradient(90deg,#1c3d62,#274169 25%,#2d426c 55%,#37446f 80%,#54406a)}
</style><menu-bar></menu-bar><browser-window></browser-window><mac-dock></mac-dock>`);
</script>
</body>
</html>
